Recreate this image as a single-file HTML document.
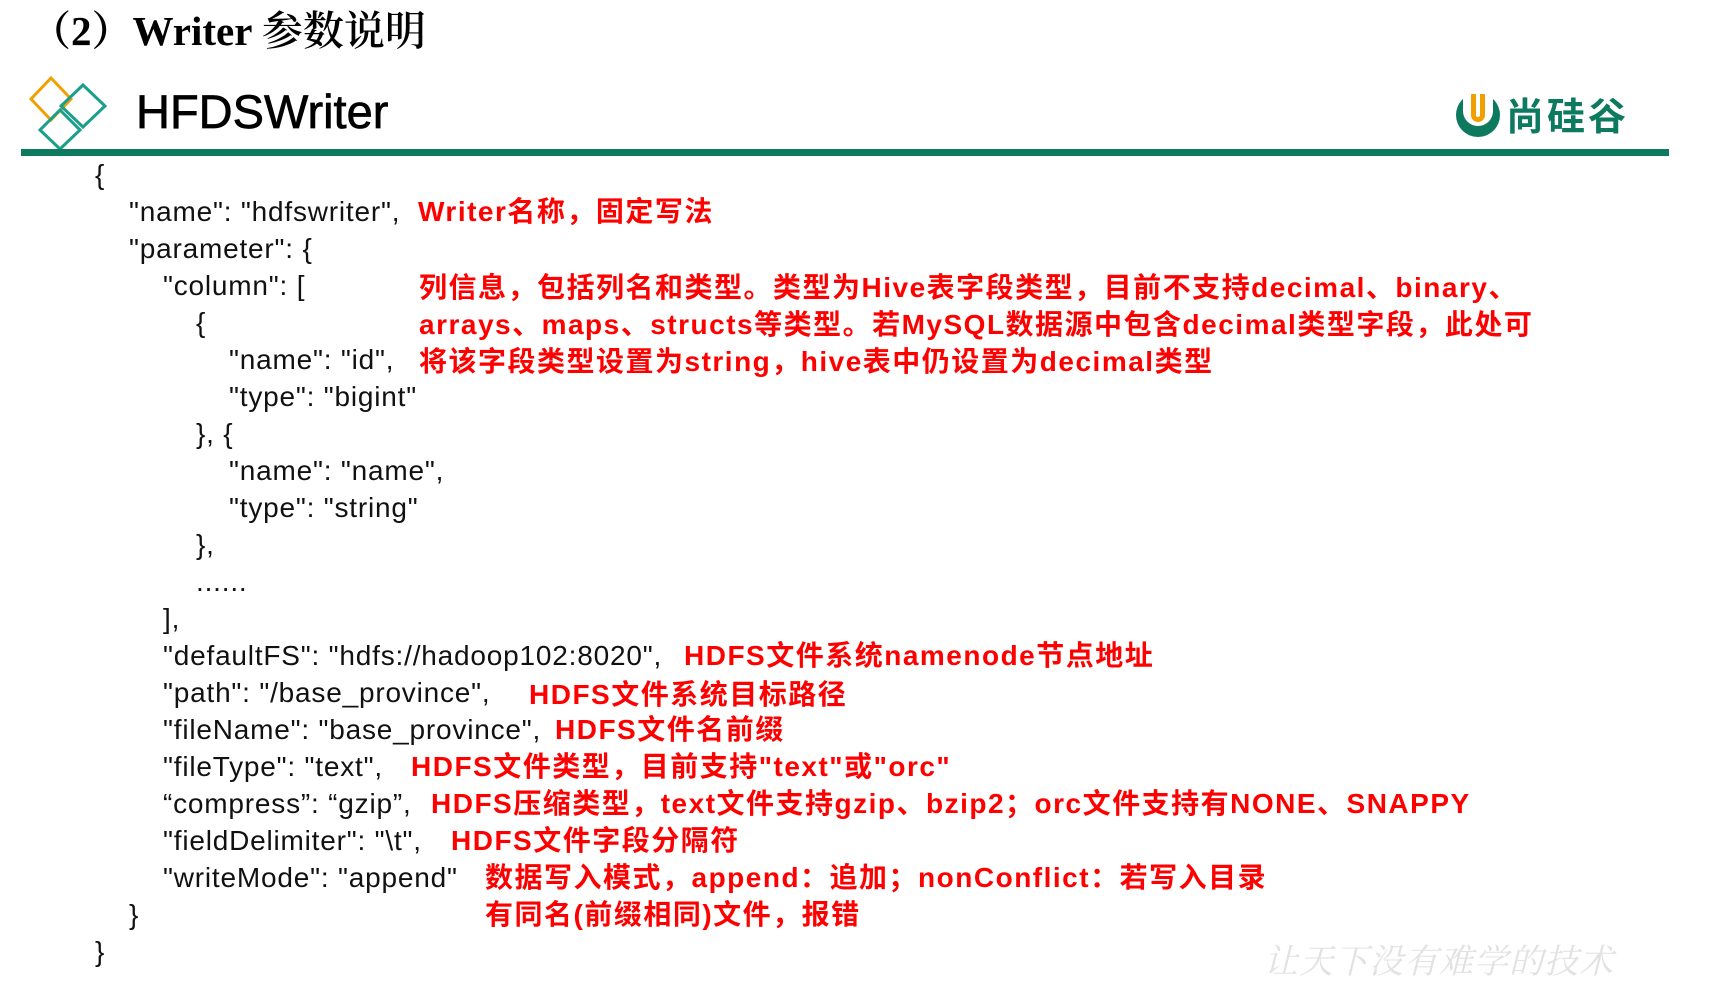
<!DOCTYPE html>
<html><head><meta charset="utf-8"><style>
body{margin:0;width:1726px;height:988px;background:#fff;position:relative;overflow:hidden;font-family:"Liberation Sans","Noto Sans CJK SC",sans-serif}
.t{position:absolute;left:30px;top:-2px;font:bold 41px "Liberation Serif","Noto Serif CJK SC",serif;color:#000;white-space:nowrap}
.t .c{font-weight:600}
.h{position:absolute;left:136px;top:82px;font:47px "Liberation Sans",sans-serif;color:#000;white-space:nowrap;line-height:60px;-webkit-text-stroke:0.7px #000}
.bar{position:absolute;left:21px;top:149px;width:1648px;height:7px;background:#0d7a5f}
.l{position:absolute;height:37px;line-height:37px;font-size:28px;letter-spacing:0.8px;color:#111;white-space:pre;margin-top:-2px}
.r{position:absolute;height:37px;line-height:37px;font-size:28px;letter-spacing:1.5px;color:#f00;font-weight:bold;white-space:pre;font-family:"Liberation Sans","Noto Sans CJK SC",sans-serif;margin-top:-2px}
.wm{position:absolute;left:1264px;top:934px;font:italic 34px "Noto Serif CJK SC",serif;color:#e2e2e2;letter-spacing:1px;white-space:nowrap}
.logo{position:absolute;left:1506px;top:92px;font:bold 38px "Noto Sans CJK SC",sans-serif;color:#0d7a5f;line-height:44px;letter-spacing:3px}
</style></head><body>
<div class="t">（2）Writer <span class="c">参数说明</span></div>
<svg style="position:absolute;left:0;top:60px" width="130" height="100">
<polygon points="51,18 71,39 51,60 31,39" fill="none" stroke="#f0a000" stroke-width="3"/>
<polygon points="83,25 105,46 83,67 61,46" fill="none" stroke="#1aa08a" stroke-width="3"/>
<polygon points="60,50 80,70 60,89 40,70" fill="none" stroke="#1aa08a" stroke-width="3"/>
</svg>
<div class="h">HFDSWriter</div>
<svg style="position:absolute;left:1454px;top:91px" width="50" height="50">
<circle cx="24" cy="24" r="22" fill="#0d7a5f"/>
<circle cx="24" cy="20" r="15" fill="#fff"/>
<rect x="9" y="0" width="30" height="20" fill="#fff"/>
<path d="M17 3 V24 a7 7 0 0 0 14 0 V3 h-5 V24 a2 2 0 0 1 -4 0 V3 z" fill="#f0a000"/>
</svg>
<div class="logo">尚硅谷</div>
<div class="bar"></div>

<div class="l" style="left:95px;top:158px">{</div>
<div class="l" style="left:129px;top:195px">"name": "hdfswriter",</div>
<div class="r" style="left:418px;top:195px">Writer名称，固定写法</div>
<div class="l" style="left:129px;top:232px">"parameter": {</div>
<div class="l" style="left:163px;top:269px">"column": [</div>
<div class="r" style="left:419px;top:271px">列信息，包括列名和类型。类型为Hive表字段类型，目前不支持decimal、binary、</div>
<div class="l" style="left:196px;top:306px">{</div>
<div class="r" style="left:419px;top:308px">arrays、maps、structs等类型。若MySQL数据源中包含decimal类型字段，此处可</div>
<div class="l" style="left:229px;top:343px">"name": "id",</div>
<div class="r" style="left:419px;top:345px">将该字段类型设置为string，hive表中仍设置为decimal类型</div>
<div class="l" style="left:229px;top:380px">"type": "bigint"</div>
<div class="l" style="left:196px;top:417px">}, {</div>
<div class="l" style="left:229px;top:454px">"name": "name",</div>
<div class="l" style="left:229px;top:491px">"type": "string"</div>
<div class="l" style="left:196px;top:528px">},</div>
<div class="l" style="left:196px;top:565px">......</div>
<div class="l" style="left:163px;top:602px">],</div>
<div class="l" style="left:163px;top:639px">"defaultFS": "hdfs://hadoop102:8020",</div>
<div class="r" style="left:684px;top:639px">HDFS文件系统namenode节点地址</div>
<div class="l" style="left:163px;top:676px">"path": "/base_province",</div>
<div class="r" style="left:529px;top:678px">HDFS文件系统目标路径</div>
<div class="l" style="left:163px;top:713px">"fileName": "base_province",</div>
<div class="r" style="left:555px;top:713px">HDFS文件名前缀</div>
<div class="l" style="left:163px;top:750px">"fileType": "text",</div>
<div class="r" style="left:411px;top:750px">HDFS文件类型，目前支持"text"或"orc"</div>
<div class="l" style="left:163px;top:787px">“compress”: “gzip”,</div>
<div class="r" style="left:431px;top:787px">HDFS压缩类型，text文件支持gzip、bzip2；orc文件支持有NONE、SNAPPY</div>
<div class="l" style="left:163px;top:824px">"fieldDelimiter": "\t",</div>
<div class="r" style="left:451px;top:824px">HDFS文件字段分隔符</div>
<div class="l" style="left:163px;top:861px">"writeMode": "append"</div>
<div class="r" style="left:485px;top:861px">数据写入模式，append：追加；nonConflict：若写入目录</div>
<div class="l" style="left:129px;top:898px">}</div>
<div class="r" style="left:485px;top:898px">有同名(前缀相同)文件，报错</div>
<div class="l" style="left:95px;top:935px">}</div>
<div class="wm">让天下没有难学的技术</div>
</body></html>
